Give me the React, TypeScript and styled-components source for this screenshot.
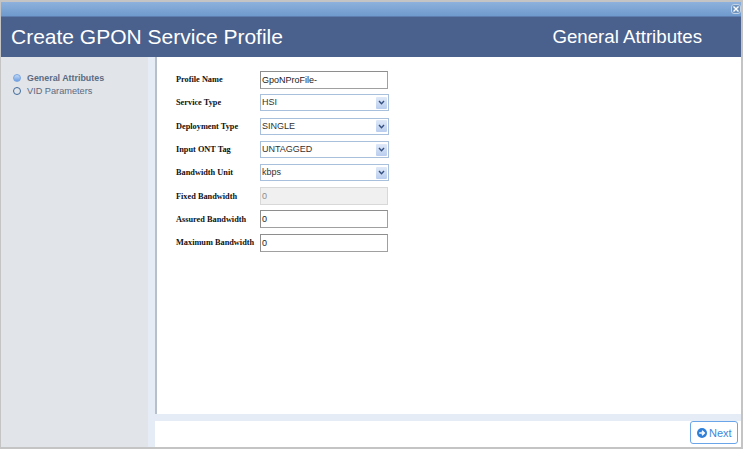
import React from "react";
import styled, { createGlobalStyle } from "styled-components";

const Global = createGlobalStyle`
  html, body { margin: 0; padding: 0; background: #fff; }
  body { font-family: "Liberation Sans", Arial, sans-serif; }
`;

const Page = styled.div`
  width: 745px;
  height: 454px;
  background: #fff;
  overflow: hidden;
`;

const Dialog = styled.div`
  width: 743px;
  height: 449px;
  box-sizing: border-box;
  border: 1px solid #c4c4c4;
  border-width: 2px 2px 2px 1px;
  display: flex;
  flex-direction: column;
`;

const TitleBar = styled.div`
  height: 14px;
  flex: none;
  background: linear-gradient(#8db1dc, #6f9acd);
  display: flex;
  justify-content: flex-end;
  align-items: center;
`;

const CloseButton = styled.div`
  width: 8px;
  height: 8px;
  border: 1px solid #c3d3e6;
  border-radius: 3px;
  background: #6f93bf;
  display: flex;
  align-items: center;
  justify-content: center;
`;

const Header = styled.div`
  height: 41px;
  flex: none;
  background: #4a618d;
  border-top: 1px solid #5d7db0;
  box-sizing: border-box;
  color: #fff;
  display: flex;
  justify-content: space-between;
  align-items: center;
  padding: 0 39px 0 10px;
`;

const HeaderTitle = styled.div`
  font-size: 21px;
  line-height: 26px;
`;

const HeaderStep = styled.div`
  font-size: 18.7px;
  line-height: 26px;
`;

const Body = styled.div`
  flex: 1;
  display: flex;
  min-height: 0;
`;

const Sidebar = styled.div`
  width: 147px;
  flex: none;
  background: #e1e4e9;
  padding: 14px 0 0 12px;
  box-sizing: border-box;
  display: flex;
  flex-direction: column;
`;

const StepRow = styled.div`
  height: 13.5px;
  display: flex;
  align-items: center;
  gap: 6px;
  font-size: ${(p) => (p.$active ? "8.9px" : "9.2px")};
  font-weight: ${(p) => (p.$active ? 700 : 400)};
  color: #5b6b82;
`;

const StepDot = styled.span`
  width: 8px;
  height: 8px;
  border-radius: 50%;
  box-sizing: border-box;
  border: ${(p) => (p.$active ? "1px solid #79a5e0" : "1.5px solid #3f6a9c")};
  background: ${(p) => (p.$active ? "linear-gradient(#c4d9f5, #6f9fe4)" : "transparent")};
`;

const Gutter = styled.div`
  width: 7px;
  flex: none;
  background: #e6ecf6;
`;

const MainColumn = styled.div`
  flex: 1;
  display: flex;
  flex-direction: column;
  min-width: 0;
`;

const Content = styled.div`
  flex: 1;
  border-left: 2px solid #b6bfca;
  padding: 11px 0 0 19px;
`;

const FormGrid = styled.div`
  display: grid;
  grid-template-columns: 84px 128px;
  grid-auto-rows: 23.3px;
  align-items: center;
`;

const Label = styled.label`
  font-family: "Liberation Serif", "Times New Roman", serif;
  font-size: 8.3px;
  font-weight: 700;
  color: #111;
  white-space: nowrap;
`;

const TextInput = styled.div`
  height: 18px;
  width: 128px;
  box-sizing: border-box;
  border: 1px solid #a0a0a0;
  border-top-color: #8e8e8e;
  border-left-color: #8e8e8e;
  padding-left: 1px;
  font-size: 9px;
  line-height: 16px;
  color: ${(p) => (p.$disabled ? "#8c8c8c" : "#222")};
  background: ${(p) => (p.$disabled ? "#f0f0f0" : "#fff")};
  ${(p) => p.$disabled && "border-color: #d8d8d8;"}
`;

const Select = styled.div`
  height: 17px;
  width: 129px;
  box-sizing: border-box;
  border: 1px solid #a9c0dc;
  padding-left: 1px;
  font-size: 9px;
  line-height: 15px;
  color: #333;
  background: #fff;
  display: flex;
  justify-content: space-between;
  align-items: center;
`;

const SelectArrow = styled.span`
  width: 11px;
  height: 12px;
  margin-right: 1px;
  border-radius: 1px;
  background: linear-gradient(#dfe9f8, #b9cdef);
  display: flex;
  align-items: center;
  justify-content: center;
`;

const Footer = styled.div`
  height: 26px;
  flex: none;
  border-top: 7px solid #e6ecf6;
  display: flex;
  justify-content: flex-end;
  align-items: flex-start;
  padding-right: 3px;
`;

const NextButton = styled.button`
  width: 48px;
  height: 23px;
  box-sizing: border-box;
  border: 1px solid #6aa5ea;
  border-radius: 3px;
  background: #fff;
  color: #3e87dc;
  font-family: "Liberation Sans", Arial, sans-serif;
  font-size: 11px;
  display: flex;
  align-items: center;
  justify-content: flex-start;
  gap: 2px;
  padding: 0 0 0 6px;
`;

const steps = [
  { label: "General Attributes", active: true },
  { label: "VID Parameters", active: false },
];

const Arrow = () => (
  <svg width="7" height="5" viewBox="0 0 8 6">
    <path d="M1 1.2 L4 4.4 L7 1.2" fill="none" stroke="#35507f" strokeWidth="1.7" />
  </svg>
);

const Field = ({ label, value, kind }: { label: string; value: string; kind: string }) => (
  <>
    <Label>{label}</Label>
    {kind === "select" ? (
      <Select>
        {value}
        <SelectArrow>
          <Arrow />
        </SelectArrow>
      </Select>
    ) : (
      <TextInput $disabled={kind === "disabled"}>{value}</TextInput>
    )}
  </>
);

export default function App() {
  return (
    <Page>
      <Global />
      <Dialog>
        <TitleBar>
          <CloseButton>
            <svg width="6" height="6" viewBox="0 0 6 6">
              <path d="M0.5 0.5 L5.5 5.5 M5.5 0.5 L0.5 5.5" stroke="#fff" strokeWidth="1.4" />
            </svg>
          </CloseButton>
        </TitleBar>
        <Header>
          <HeaderTitle>Create GPON Service Profile</HeaderTitle>
          <HeaderStep>General Attributes</HeaderStep>
        </Header>
        <Body>
          <Sidebar>
            {steps.map((s) => (
              <StepRow key={s.label} $active={s.active}>
                <StepDot $active={s.active} />
                {s.label}
              </StepRow>
            ))}
          </Sidebar>
          <Gutter />
          <MainColumn>
            <Content>
              <FormGrid>
                <Field label="Profile Name" value="GpoNProFile-" kind="text" />
                <Field label="Service Type" value="HSI" kind="select" />
                <Field label="Deployment Type" value="SINGLE" kind="select" />
                <Field label="Input ONT Tag" value="UNTAGGED" kind="select" />
                <Field label="Bandwidth Unit" value="kbps" kind="select" />
                <Field label="Fixed Bandwidth" value="0" kind="disabled" />
                <Field label="Assured Bandwidth" value="0" kind="text" />
                <Field label="Maximum Bandwidth" value="0" kind="text" />
              </FormGrid>
            </Content>
            <Footer>
              <NextButton>
                <svg width="10" height="10" viewBox="0 0 10 10">
                  <circle cx="5" cy="5" r="5" fill="#2f7fd8" />
                  <path d="M2.2 5 H7 M5 2.8 L7.3 5 L5 7.2" fill="none" stroke="#fff" strokeWidth="1.5" />
                </svg>
                Next
              </NextButton>
            </Footer>
          </MainColumn>
        </Body>
      </Dialog>
    </Page>
  );
}
